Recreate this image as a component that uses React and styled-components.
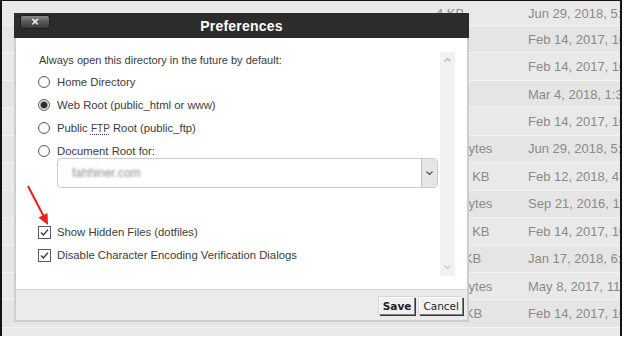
import React from "react";
import styled, { createGlobalStyle } from "styled-components";

const GlobalStyle = createGlobalStyle`
  html, body { margin: 0; padding: 0; background: #ffffff; }
  body { font-family: "Liberation Sans", Arial, sans-serif; }
`;

const Screen = styled.div`
  position: relative;
  width: 622px;
  height: 336px;
  box-sizing: border-box;
  border: 2px solid #141414;
  border-top-width: 1px;
  border-bottom: none;
  overflow: hidden;
  background: #e8e8e8;
`;

const FileTable = styled.div`
  display: flex;
  flex-direction: column;
`;

const FileRow = styled.div`
  display: grid;
  grid-template-columns: 434px 92px 1fr;
  align-items: center;
  flex: none;
  height: ${(p) => p.$h}px;
  box-sizing: border-box;
  border-bottom: 1px solid #f3f3f3;
  background: ${(p) => (p.$alt ? "#e5e5e5" : "#e9e9e9")};
  font-size: 13px;
  color: #8a8a8a;
  white-space: nowrap;
`;

const Cell = styled.span`
  overflow: hidden;
  white-space: nowrap;
`;

const Dialog = styled.div`
  position: absolute;
  left: 12px;
  top: 12px;
  width: 455px;
  height: 309px;
  box-sizing: border-box;
  display: flex;
  flex-direction: column;
  border: 2px solid #cdcdcd;
  border-top: none;
  background: #ffffff;
  z-index: 1;
`;

const TitleBar = styled.div`
  flex: none;
  height: 25px;
  margin: 0 -2px;
  display: grid;
  grid-template-columns: 1fr auto 1fr;
  align-items: center;
  background: #2c2c2c;
`;

const CloseButton = styled.button`
  justify-self: start;
  align-self: start;
  margin: 2px 0 0 6px;
  width: 30px;
  height: 14px;
  padding: 0;
  border: 1px solid #1c1c1c;
  border-radius: 3px;
  background: linear-gradient(#8a8a8a 0%, #5a5a5a 45%, #3a3a3a 100%);
  color: #ffffff;
  font-family: "DejaVu Sans", Verdana, sans-serif;
  font-size: 11px;
  font-weight: 700;
  line-height: 12px;
  display: flex;
  align-items: center;
  justify-content: center;
`;

const Title = styled.div`
  color: #ffffff;
  font-size: 14px;
  font-weight: 700;
  letter-spacing: 0.2px;
`;

const Body = styled.div`
  flex: 1;
  padding: 14px 12px 13px 14px;
`;

const ScrollArea = styled.div`
  display: flex;
  height: 224px;
`;

const Content = styled.div`
  flex: 1;
  padding-left: 8px;
  color: #3a3a3a;
`;

const Intro = styled.div`
  height: 16px;
  line-height: 16px;
  padding-left: 1px;
  font-size: 11px;
`;

const OptionList = styled.div`
  display: flex;
  flex-direction: column;
  gap: 9px;
  margin-top: ${(p) => p.$top}px;
`;

const OptionRow = styled.label`
  display: flex;
  align-items: center;
  gap: ${(p) => p.$gap}px;
  height: 14px;
  font-size: 11.3px;
  line-height: 14px;
  color: #3c3c3c;
`;

const Radio = styled.span`
  flex: none;
  width: 12px;
  height: 12px;
  box-sizing: border-box;
  border-radius: 50%;
  border: 1px solid #5c5c5c;
  background: radial-gradient(circle, #ffffff 0%, #f4f4f4 100%);
  display: flex;
  align-items: center;
  justify-content: center;
  &::after {
    content: "";
    width: 6px;
    height: 6px;
    border-radius: 50%;
    background: ${(p) => (p.$checked ? "#2a2a2a" : "transparent")};
    box-shadow: ${(p) => (p.$checked ? "0 0 0 1px #9a9a9a" : "none")};
  }
`;

const Abbr = styled.abbr`
  text-decoration: underline dotted;
  text-underline-offset: 2px;
  font-size: 10px;
`;

const Select = styled.div`
  margin-left: 19px;
  width: 381px;
  height: 30px;
  box-sizing: border-box;
  border: 1px solid #cbcbcb;
  border-radius: 4px;
  display: flex;
  overflow: hidden;
  background: #ffffff;
`;

const SelectValue = styled.div`
  flex: 1;
  display: flex;
  align-items: center;
  padding-left: 14px;
  font-size: 12px;
  color: #8c8c8c;
  filter: blur(1px);
`;

const SelectArrow = styled.div`
  flex: none;
  width: 15px;
  border-left: 1px solid #c2c2c2;
  background: #e6e6e6;
  display: flex;
  align-items: center;
  justify-content: center;
`;

const Checkbox = styled.span`
  flex: none;
  width: 13px;
  height: 13px;
  box-sizing: border-box;
  border: 1px solid #5a5a5a;
  background: #ffffff;
  display: flex;
  align-items: center;
  justify-content: center;
`;

const Scrollbar = styled.div`
  flex: none;
  width: 15px;
  background: #f2f2f2;
  display: flex;
  flex-direction: column;
  justify-content: space-between;
  align-items: center;
  padding: 6px 0 7px;
  box-sizing: border-box;
`;

const Footer = styled.div`
  flex: none;
  height: 31px;
  box-sizing: border-box;
  border-top: 1px solid #d8d8d8;
  background: #ebebeb;
  display: flex;
  justify-content: flex-end;
  align-items: flex-start;
  gap: 4px;
  padding: 7px 4px 0 0;
`;

const Button = styled.button`
  height: 18px;
  padding: 0 3px;
  font-family: "DejaVu Sans", Verdana, sans-serif;
  font-size: 10.5px;
  font-weight: ${(p) => (p.$primary ? 700 : 400)};
  color: #1e1e1e;
  background: #f0f0f0;
  border: 1px solid;
  border-color: #ffffff #808080 #808080 #ffffff;
  box-shadow: 1px 1px 0 #3a3a3a, -1px -1px 0 #d6d6d6;
  line-height: 16px;
`;

const Annotation = styled.svg`
  position: absolute;
  left: 18px;
  top: 179px;
  z-index: 2;
`;

const rows = [
  { size: "4 KB", date: "Jun 29, 2018, 5:42 PM", h: 25 },
  { size: "4 KB", date: "Feb 14, 2017, 10:12 AM" },
  { size: "4 KB", date: "Feb 14, 2017, 10:12 AM" },
  { size: "4 KB", date: "Mar 4, 2018, 1:36 PM" },
  { size: "4 KB", date: "Feb 14, 2017, 10:12 AM" },
  { size: "489 bytes", date: "Jun 29, 2018, 5:42 PM" },
  { size: "12.29 KB", date: "Feb 12, 2018, 4:18 PM" },
  { size: "512 bytes", date: "Sep 21, 2016, 12:05 PM" },
  { size: "12.31 KB", date: "Feb 14, 2017, 10:12 AM" },
  { size: "11.2 KB", date: "Jan 17, 2018, 6:51 PM" },
  { size: "659 bytes", date: "May 8, 2017, 11:20 AM" },
  { size: "17.3 KB", date: "Feb 14, 2017, 10:12 AM" },
  { size: "", date: "" },
];

const Chevron = ({ up, color = "#555", w = 7, h = 4 }) => (
  <svg width={w} height={h} viewBox="0 0 7 4">
    <path
      d={up ? "M0.5 3.5 L3.5 0.5 L6.5 3.5" : "M0.5 0.5 L3.5 3.5 L6.5 0.5"}
      fill="none"
      stroke={color}
      strokeWidth="1.2"
    />
  </svg>
);

const Check = () => (
  <svg width="9" height="9" viewBox="0 0 9 9">
    <path d="M1 4.6 L3.4 7 L8 1.6" fill="none" stroke="#3a3a3a" strokeWidth="1.4" />
  </svg>
);

export default function App() {
  return (
    <>
      <GlobalStyle />
      <Screen>
        <FileTable>
          {rows.map((r, i) => (
            <FileRow key={i} $h={r.h || 27.45} $alt={i % 2 === 1}>
              <Cell />
              <Cell>{r.size}</Cell>
              <Cell>{r.date}</Cell>
            </FileRow>
          ))}
        </FileTable>

        <Dialog>
          <TitleBar>
            <CloseButton aria-label="Close">×</CloseButton>
            <Title>Preferences</Title>
            <span />
          </TitleBar>
          <Body>
            <ScrollArea>
              <Content>
                <Intro>Always open this directory in the future by default:</Intro>
                <OptionList $top={7}>
                  <OptionRow $gap={7}>
                    <Radio />
                    Home Directory
                  </OptionRow>
                  <OptionRow $gap={7}>
                    <Radio $checked />
                    Web Root (public_html or www)
                  </OptionRow>
                  <OptionRow $gap={7}>
                    <Radio />
                    <span>
                      Public <Abbr title="File Transfer Protocol">FTP</Abbr> Root (public_ftp)
                    </span>
                  </OptionRow>
                  <OptionRow $gap={7}>
                    <Radio />
                    Document Root for:
                  </OptionRow>
                </OptionList>
                <Select>
                  <SelectValue>fahhiner.com</SelectValue>
                  <SelectArrow>
                    <Chevron color="#555" />
                  </SelectArrow>
                </Select>
                <OptionList $top={37}>
                  <OptionRow $gap={6}>
                    <Checkbox>
                      <Check />
                    </Checkbox>
                    Show Hidden Files (dotfiles)
                  </OptionRow>
                  <OptionRow $gap={6}>
                    <Checkbox>
                      <Check />
                    </Checkbox>
                    Disable Character Encoding Verification Dialogs
                  </OptionRow>
                </OptionList>
              </Content>
              <Scrollbar>
                <Chevron up color="#b4b4b4" />
                <Chevron color="#c4c4c4" />
              </Scrollbar>
            </ScrollArea>
          </Body>
          <Footer>
            <Button $primary>Save</Button>
            <Button>Cancel</Button>
          </Footer>
        </Dialog>

        <Annotation width="34" height="50" viewBox="0 0 34 50">
          <line x1="8" y1="6" x2="23.5" y2="36" stroke="#e8211c" strokeWidth="2" />
          <polygon points="28,45 27.5,33 18.5,37.5" fill="#e8211c" />
        </Annotation>
      </Screen>
    </>
  );
}
